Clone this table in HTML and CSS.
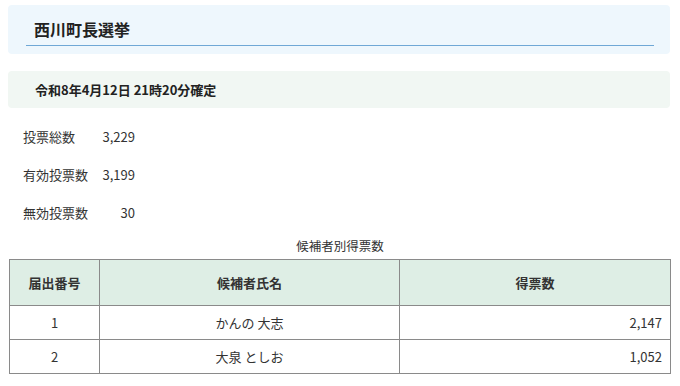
FILE: index.html
```html
<!DOCTYPE html>
<html lang="ja">
<head>
<meta charset="utf-8">
<link rel="stylesheet" href="styles.css">
</head>
<body>
<div class="title-box">
  <h1 class="title">西川町長選挙</h1>
</div>
<div class="date-box">令和8年4月12日 21時20分確定</div>
<table class="stats">
  <tr><th>投票総数</th><td>3,229</td></tr>
  <tr><th>有効投票数</th><td>3,199</td></tr>
  <tr><th>無効投票数</th><td>30</td></tr>
</table>
<table class="results">
  <caption>候補者別得票数</caption>
  <thead>
    <tr><th class="c-no">届出番号</th><th class="c-name">候補者氏名</th><th class="c-votes">得票数</th></tr>
  </thead>
  <tbody>
    <tr><td class="c-no">1</td><td class="c-name">かんの 大志</td><td class="c-votes">2,147</td></tr>
    <tr><td class="c-no">2</td><td class="c-name">大泉 としお</td><td class="c-votes">1,052</td></tr>
  </tbody>
</table>
</body>
</html>
```
FILE: styles.css
```css
html, body { margin: 0; padding: 0; background: #fff; }
body {
  padding: 5px 10px 0 8px;
  font-family: "Noto Sans CJK JP", "Noto Sans", sans-serif;
  color: #333;
  font-size: 13px;
}
.title-box {
  background: #eef7fd;
  border-radius: 4px;
  padding: 10px 16px 8px 18px;
}
.title {
  margin: 0;
  font-size: 16px;
  font-weight: bold;
  line-height: 22px;
  padding: 3px 0 5px 8px;
  border-bottom: 1px solid #6fa8d6;
  color: #222;
}
.date-box {
  margin-top: 17px;
  background: #f1f7f3;
  border-radius: 4px;
  height: 37px;
  line-height: 37px;
  padding-left: 27px;
  font-weight: bold;
  font-size: 13px;
  color: #222;
}
.stats {
  margin: 9px 0 0 13px;
  border-collapse: collapse;
}
.stats th {
  font-weight: normal;
  text-align: left;
  padding: 0 2px 0 2px;
  height: 38px;
}
.stats td {
  text-align: right;
  padding: 0 0 0 10px;
  min-width: 35px;
}
.results {
  width: 662px;
  margin: 6px 0 0 1px;
  border-collapse: collapse;
}
.results caption {
  font-size: 12.5px;
  line-height: 18px;
  padding-bottom: 4px;
}
.results th, .results td {
  border: 1px solid #8a8a8a;
  padding: 0 8px;
}
.results th {
  background: #deeee5;
  font-weight: bold;
  height: 45px;
}
.results td { height: 33px; }
.c-no { width: 73px; text-align: center; }
.c-name { width: 283px; text-align: center; }
.results td.c-votes { text-align: right; }
```
